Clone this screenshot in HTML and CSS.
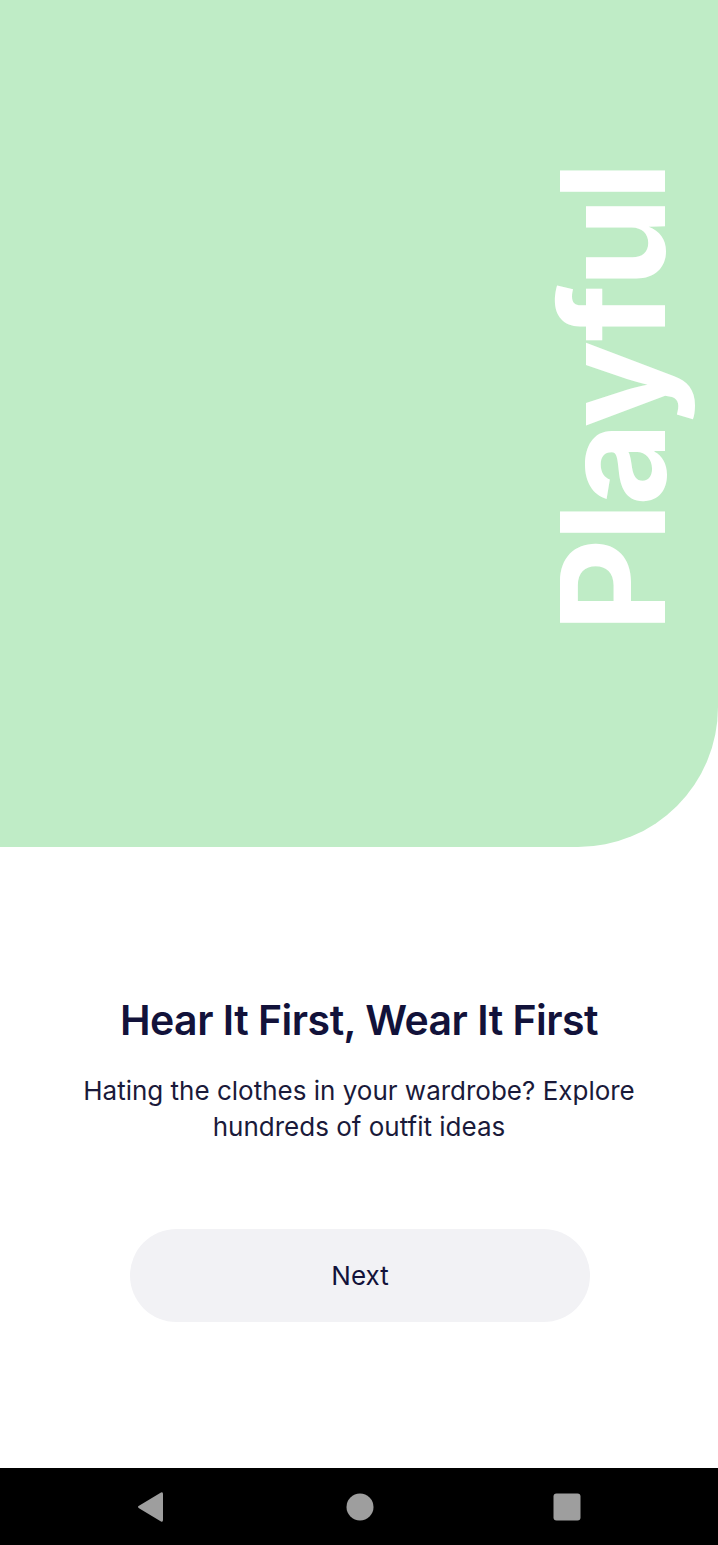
FILE: index.html
```html
<!DOCTYPE html>
<html lang="en">
<head>
<meta charset="utf-8">
<title>Onboarding</title>
<link rel="stylesheet" href="styles.css">
</head>
<body>
<div class="screen">
  <section class="hero">
    <div class="hero-word">Playful</div>
  </section>
  <main class="content">
    <h1 class="title">Hear It First, Wear It First</h1>
    <p class="subtitle">Hating the clothes in your wardrobe? Explore<br>hundreds of outfit ideas</p>
    <button class="next-btn" type="button">Next</button>
  </main>
  <nav class="navbar">
    <svg class="nav-icon" width="30" height="32" viewBox="0 0 30 32"><path d="M3 17.2 Q1 16 3 14.8 L25 1.5 Q27 0.5 27 3 L27 29 Q27 31.5 25 30.5 Z" fill="#9e9e9e"/></svg>
    <svg class="nav-icon" width="28" height="28" viewBox="0 0 28 28"><circle cx="14" cy="14" r="13.5" fill="#9e9e9e"/></svg>
    <svg class="nav-icon" width="28" height="28" viewBox="0 0 28 28"><rect x="0.5" y="0.5" width="27" height="27" rx="3" fill="#9e9e9e"/></svg>
  </nav>
</div>
</body>
</html>
```
FILE: styles.css
```css
* { box-sizing: border-box; }
html, body { margin: 0; padding: 0; background: #ffffff; }
body { font-family: Inter, "Noto Sans", "Liberation Sans", sans-serif; }

.screen {
  width: 718px;
  height: 1545px;
  display: flex;
  flex-direction: column;
  overflow: hidden;
}

.hero {
  height: 847px;
  flex: none;
  background: #bfecc6;
  border-bottom-right-radius: 140px;
  display: flex;
  justify-content: flex-end;
  align-items: flex-start;
  padding-top: 165px;
  padding-right: 33px;
}

.hero-word {
  writing-mode: vertical-rl;
  transform: rotate(180deg);
  color: #ffffff;
  font-weight: 700;
  font-size: 145px;
  line-height: 1;
  letter-spacing: -3.5px;
}

.content {
  flex: 1;
  display: flex;
  flex-direction: column;
  align-items: center;
  padding-top: 149px;
  color: #12123a;
}

.title {
  margin: 0;
  font-size: 41px;
  font-weight: 600;
  line-height: 48px;
  letter-spacing: -0.5px;
}

.subtitle {
  margin: 29px 0 0;
  font-size: 26px;
  font-weight: 400;
  line-height: 36px;
  text-align: center;
  color: #1a1a3a;
}

.next-btn {
  margin-top: 84px;
  width: 460px;
  height: 93px;
  border: none;
  border-radius: 47px;
  background: #f2f2f5;
  color: #12123a;
  font-family: inherit;
  font-size: 26px;
  font-weight: 400;
  align-self: center;
  transform: translateX(1px);
}

.navbar {
  height: 77px;
  flex: none;
  background: #000000;
  display: flex;
  align-items: center;
  justify-content: space-between;
  padding: 0 137px 0 136px;
}

.nav-icon { display: block; }
```
